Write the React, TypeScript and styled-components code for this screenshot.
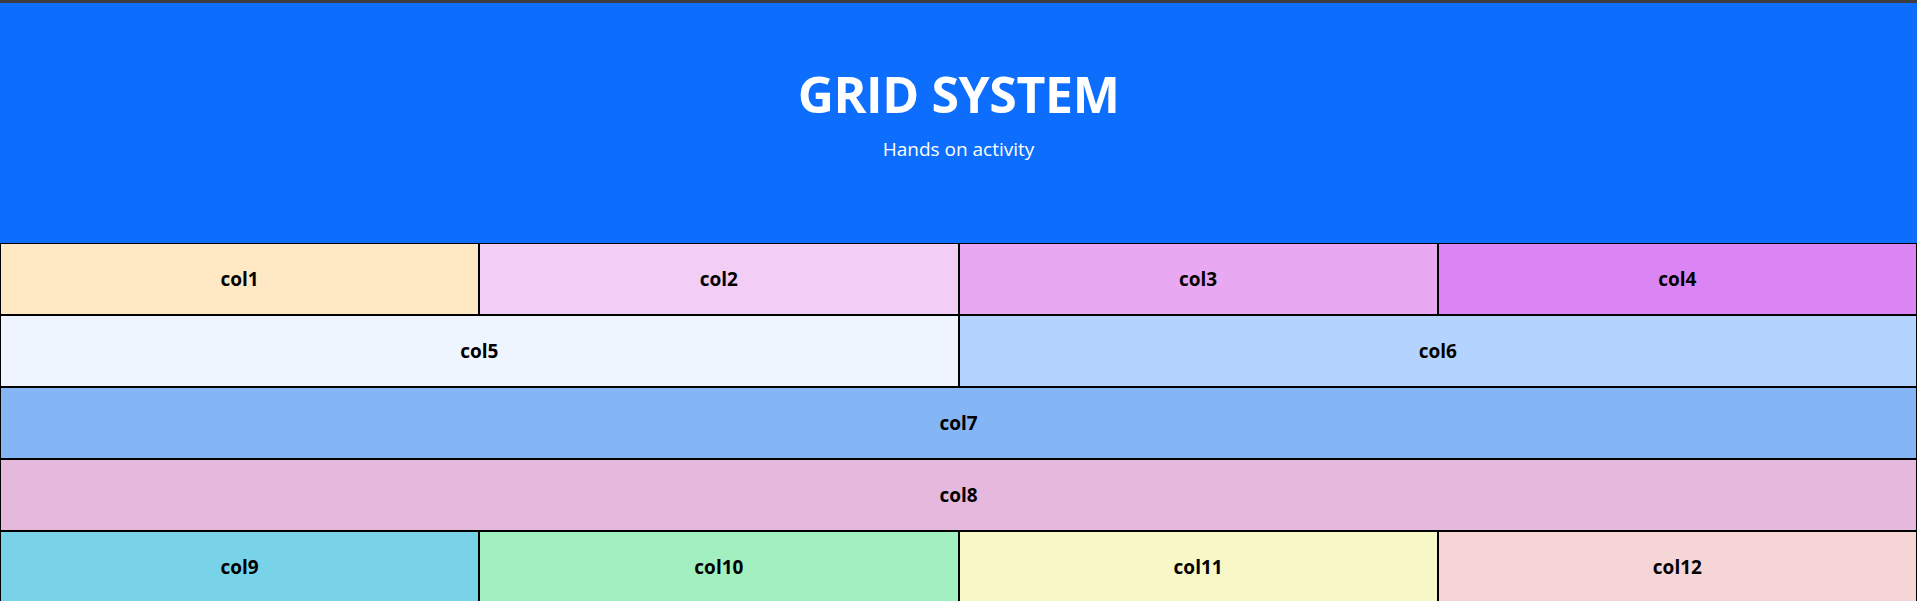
import styled, { createGlobalStyle } from "styled-components";

const GlobalStyle = createGlobalStyle`
  * {
    box-sizing: border-box;
  }
  body {
    margin: 0;
    font-family: "Open Sans", "Noto Sans", "Liberation Sans", sans-serif;
    background: #ffffff;
    color: #212529;
  }
`;

type CellType = {
  bg: string;
  span: number;
};

const TopEdge = styled.div`
  height: 3px;
  background: #3d3d3f;
`;

const Header = styled.header`
  background: #0d6efd;
  color: #ffffff;
  text-align: center;
  padding: 61px 0 59px;
`;

const Title = styled.h1`
  margin: 0 0 10px;
  font-size: 50px;
  line-height: 60px;
  font-weight: 700;
  letter-spacing: -0.4px;
`;

const SubTitle = styled.p`
  margin: 0 0 20px;
  font-size: 19px;
  line-height: 30px;
`;

const Grid = styled.section`
  display: grid;
  grid-template-columns: repeat(4, 1fr);
`;

const Cell = styled.div<CellType>`
  grid-column: span ${props => props.span};
  background: ${props => props.bg};
  border: 1px solid #000000;
  padding: 20px 0;
  text-align: center;
  font-size: 19px;
  line-height: 30px;
  font-weight: 700;
  color: #000000;
`;

const cells = [
  { name: "col1", bg: "#ffe8c4", span: 1 },
  { name: "col2", bg: "#f2cdf4", span: 1 },
  { name: "col3", bg: "#e8a8f2", span: 1 },
  { name: "col4", bg: "#db84f3", span: 1 },
  { name: "col5", bg: "#eff5ff", span: 2 },
  { name: "col6", bg: "#b4d4ff", span: 2 },
  { name: "col7", bg: "#84b5f5", span: 4 },
  { name: "col8", bg: "#e5b9de", span: 4 },
  { name: "col9", bg: "#79d3e8", span: 1 },
  { name: "col10", bg: "#a2efbf", span: 1 },
  { name: "col11", bg: "#f7f7c8", span: 1 },
  { name: "col12", bg: "#f6d5d7", span: 1 },
];

function App() {
  return (
    <>
      <GlobalStyle />
      <TopEdge />
      <Header>
        <Title>GRID SYSTEM</Title>
        <SubTitle>Hands on activity</SubTitle>
      </Header>
      <Grid>
        {cells.map(cell => (
          <Cell key={cell.name} bg={cell.bg} span={cell.span}>
            {cell.name}
          </Cell>
        ))}
      </Grid>
    </>
  );
}

export default App;
